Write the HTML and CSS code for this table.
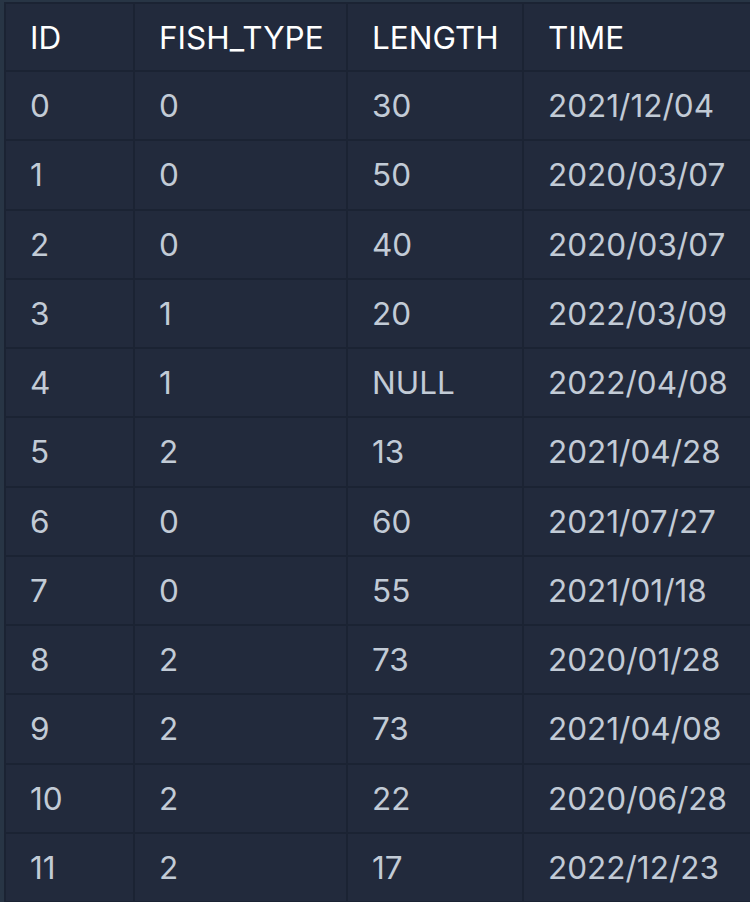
FILE: index.html
```html
<!DOCTYPE html>
<html lang="en">
<head>
  <meta charset="UTF-8">
  <meta name="viewport" content="width=device-width, initial-scale=1.0">
  <title>Fish table</title>
  <link rel="stylesheet" href="styles.css">
</head>
<body>
  <div class="frame">
    <table class="grid">
      <thead>
        <tr><th>ID</th><th>FISH_TYPE</th><th>LENGTH</th><th>TIME</th></tr>
      </thead>
      <tbody>
        <tr><td>0</td><td>0</td><td>30</td><td>2021/12/04</td></tr>
        <tr><td>1</td><td>0</td><td>50</td><td>2020/03/07</td></tr>
        <tr><td>2</td><td>0</td><td>40</td><td>2020/03/07</td></tr>
        <tr><td>3</td><td>1</td><td>20</td><td>2022/03/09</td></tr>
        <tr><td>4</td><td>1</td><td>NULL</td><td>2022/04/08</td></tr>
        <tr><td>5</td><td>2</td><td>13</td><td>2021/04/28</td></tr>
        <tr><td>6</td><td>0</td><td>60</td><td>2021/07/27</td></tr>
        <tr><td>7</td><td>0</td><td>55</td><td>2021/01/18</td></tr>
        <tr><td>8</td><td>2</td><td>73</td><td>2020/01/28</td></tr>
        <tr><td>9</td><td>2</td><td>73</td><td>2021/04/08</td></tr>
        <tr><td>10</td><td>2</td><td>22</td><td>2020/06/28</td></tr>
        <tr><td>11</td><td>2</td><td>17</td><td>2022/12/23</td></tr>
      </tbody>
    </table>
  </div>
</body>
</html>
```

FILE: styles.css
```css
body { margin: 0; background-color: #283545; overflow: hidden; }
.frame { padding: 2px 0 0 4px; }
.grid {
  border-collapse: collapse;
  background-color: #222a3c;
  font-family: Inter, "Noto Sans", sans-serif;
  font-size: 31.5px;
  table-layout: fixed;
  width: 760px;
}
.grid th, .grid td {
  border: 2px solid #1b2333;
  height: 67.25px;
  padding: 0 0 0 24px;
  text-align: left;
  white-space: nowrap;
}
.grid th { color: #ffffff; font-weight: 400; height: 66px; }
.grid td { color: #c2cbd6; }
.grid th:nth-child(1) { width: 103px; }
.grid th:nth-child(2) { width: 187px; }
.grid th:nth-child(3) { width: 150px; }
```
